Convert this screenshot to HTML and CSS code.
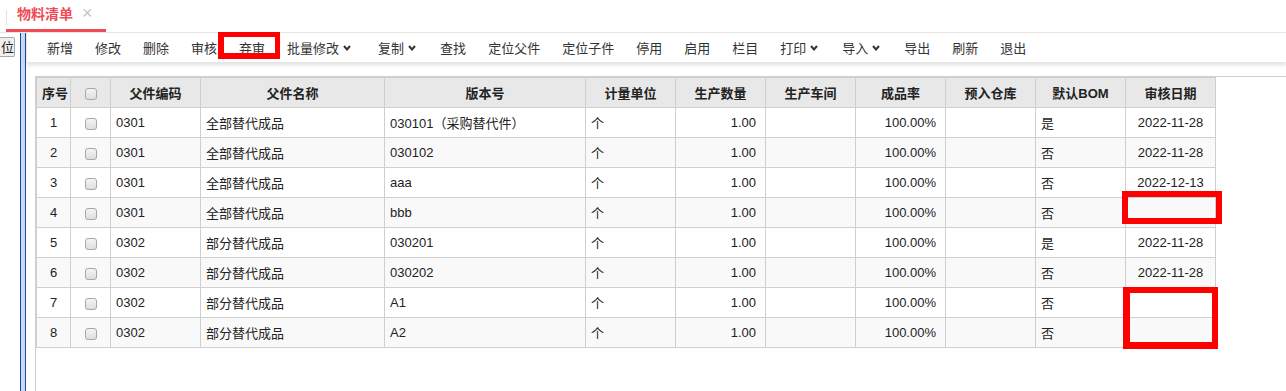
FILE: index.html
```html
<!DOCTYPE html>
<html lang="zh-CN">
<head>
  <meta charset="UTF-8" />
  <title>物料清单</title>
  <link rel="stylesheet" href="styles.css">
</head>
<body>

<div class="tabbar">
  <div class="tab active">
    <span class="tab-title">物料清单</span>
    <span class="tab-close">×</span>
  </div>
</div>

<div class="main">
  <div class="side">
    <button class="locate">位</button>
  </div>
  <div class="splitter"></div>

  <div class="content">
    <div class="toolbar">
      <span class="tool">新增</span>
      <span class="tool">修改</span>
      <span class="tool">删除</span>
      <span class="tool">审核</span>
      <span class="tool">弃审</span>
      <span class="tool drop wide">批量修改<svg class="chev" viewBox="0 0 8 6"><polyline points="1,1 4,4.5 7,1"/></svg></span>
      <span class="tool drop">复制<svg class="chev" viewBox="0 0 8 6"><polyline points="1,1 4,4.5 7,1"/></svg></span>
      <span class="tool">查找</span>
      <span class="tool">定位父件</span>
      <span class="tool">定位子件</span>
      <span class="tool">停用</span>
      <span class="tool">启用</span>
      <span class="tool">栏目</span>
      <span class="tool drop">打印<svg class="chev" viewBox="0 0 8 6"><polyline points="1,1 4,4.5 7,1"/></svg></span>
      <span class="tool drop">导入<svg class="chev" viewBox="0 0 8 6"><polyline points="1,1 4,4.5 7,1"/></svg></span>
      <span class="tool">导出</span>
      <span class="tool">刷新</span>
      <span class="tool">退出</span>
    </div>

    <div class="grid">
      <table class="bom">
        <colgroup>
          <col style="width:34px"><col style="width:40px"><col style="width:90px"><col style="width:184px">
          <col style="width:201px"><col style="width:90px"><col style="width:90px"><col style="width:90px">
          <col style="width:90px"><col style="width:90px"><col style="width:90px"><col style="width:90px">
        </colgroup>
        <thead>
          <tr>
            <th>序号</th>
            <th><span class="chk"></span></th>
            <th>父件编码</th>
            <th>父件名称</th>
            <th>版本号</th>
            <th>计量单位</th>
            <th>生产数量</th>
            <th>生产车间</th>
            <th>成品率</th>
            <th>预入仓库</th>
            <th>默认BOM</th>
            <th>审核日期</th>
          </tr>
        </thead>
        <tbody>
          <tr>
            <td class="c">1</td><td class="c"><span class="chk"></span></td><td>0301</td><td>全部替代成品</td>
            <td>030101（采购替代件）</td><td>个</td><td class="r">1.00</td><td></td>
            <td class="r">100.00%</td><td></td><td>是</td><td class="c">2022-11-28</td>
          </tr>
          <tr>
            <td class="c">2</td><td class="c"><span class="chk"></span></td><td>0301</td><td>全部替代成品</td>
            <td>030102</td><td>个</td><td class="r">1.00</td><td></td>
            <td class="r">100.00%</td><td></td><td>否</td><td class="c">2022-11-28</td>
          </tr>
          <tr>
            <td class="c">3</td><td class="c"><span class="chk"></span></td><td>0301</td><td>全部替代成品</td>
            <td>aaa</td><td>个</td><td class="r">1.00</td><td></td>
            <td class="r">100.00%</td><td></td><td>否</td><td class="c">2022-12-13</td>
          </tr>
          <tr>
            <td class="c">4</td><td class="c"><span class="chk"></span></td><td>0301</td><td>全部替代成品</td>
            <td>bbb</td><td>个</td><td class="r">1.00</td><td></td>
            <td class="r">100.00%</td><td></td><td>否</td><td class="c"></td>
          </tr>
          <tr>
            <td class="c">5</td><td class="c"><span class="chk"></span></td><td>0302</td><td>部分替代成品</td>
            <td>030201</td><td>个</td><td class="r">1.00</td><td></td>
            <td class="r">100.00%</td><td></td><td>是</td><td class="c">2022-11-28</td>
          </tr>
          <tr>
            <td class="c">6</td><td class="c"><span class="chk"></span></td><td>0302</td><td>部分替代成品</td>
            <td>030202</td><td>个</td><td class="r">1.00</td><td></td>
            <td class="r">100.00%</td><td></td><td>否</td><td class="c">2022-11-28</td>
          </tr>
          <tr>
            <td class="c">7</td><td class="c"><span class="chk"></span></td><td>0302</td><td>部分替代成品</td>
            <td>A1</td><td>个</td><td class="r">1.00</td><td></td>
            <td class="r">100.00%</td><td></td><td>否</td><td class="c"></td>
          </tr>
          <tr>
            <td class="c">8</td><td class="c"><span class="chk"></span></td><td>0302</td><td>部分替代成品</td>
            <td>A2</td><td>个</td><td class="r">1.00</td><td></td>
            <td class="r">100.00%</td><td></td><td>否</td><td class="c"></td>
          </tr>
        </tbody>
      </table>
    </div>
  </div>
</div>

<!-- annotation boxes drawn over the screenshot -->
<div class="mark mark-unaudit"></div>
<div class="mark mark-row4"></div>
<div class="mark mark-row78"></div>

</body>
</html>
```

FILE: styles.css
```css
:root {
  --text: #333;
  --line: #cfcfcf;
  --head-bg: #e8e8e8;
  --stripe: #f9f9f9;
  --tab-red: #ef4b55;
  --split-dark: #1d4ca8;
  --split-light: #c9d9f1;
}

* { box-sizing: border-box; }

body {
  margin: 0;
  background: #fff;
  color: var(--text);
  font-family: "Liberation Sans", "Noto Sans CJK SC", sans-serif;
  font-size: 13px;
  position: relative;
  height: 391px;
  overflow: hidden;
}

/* tab bar */
.tabbar {
  height: 33px;
  border-bottom: 1px solid #e6e6e6;
  padding-left: 6px;
  display: flex;
  align-items: flex-start;
}
.tab {
  height: 32px;
  width: 100px;
  display: flex;
  align-items: center;
  padding: 0 0 4px 11px;
  border-bottom: 3px solid var(--tab-red);
  gap: 9px;
  position: relative;
}
.tab::before {
  content: "";
  position: absolute;
  left: 0; top: 10px;
  height: 15px;
  border-left: 1px solid #e2e2e2;
}
.tab-title {
  color: var(--tab-red);
  font-size: 14px;
  font-weight: bold;
}
.tab-close {
  color: #c4c4c4;
  font-size: 18px;
  line-height: 1;
}

/* main area */
.main {
  display: flex;
  height: 358px;
}
.side {
  width: 20px;
  padding-top: 4px;
}
.locate {
  display: block;
  width: 15px;
  height: 20px;
  padding: 0;
  margin: 0;
  border: 1px solid #a9a9a9;
  border-left: none;
  border-radius: 0 2px 2px 0;
  background: #efefef;
  font-family: inherit;
  font-size: 13px;
  color: #222;
  line-height: 17px;
  text-align: right;
}
.splitter {
  width: 6px;
  background: var(--split-light);
  border-left: 1px solid var(--split-dark);
  border-right: 1px solid var(--split-dark);
}
.content {
  flex: 1;
  min-width: 0;
}

/* toolbar */
.toolbar {
  height: 29px;
  display: flex;
  align-items: center;
  padding-left: 9px;
  border-left: 1px solid #e8e8e8;
  box-shadow: 0 3px 4px rgba(0, 0, 0, 0.12);
  white-space: nowrap;
}
.tool {
  padding: 0 11px;
  display: flex;
  align-items: center;
  gap: 4px;
  color: var(--text);
}
.tool.drop { padding-right: 13px; }
.tool.drop.wide { padding-right: 16px; }
.chev {
  width: 8px;
  height: 6px;
  fill: none;
  stroke: #333;
  stroke-width: 2;
}

/* grid */
.grid {
  margin: 14px 0 0 9px;
  height: 320px;
  border-top: 1px solid var(--line);
  border-left: 1px solid var(--line);
}
.bom {
  table-layout: fixed;
  width: 1180px;
  border-collapse: collapse;
  border: 1px solid var(--line);
}
.bom th,
.bom td {
  height: 30px;
  border: 1px solid var(--line);
  padding: 0 5px;
  white-space: nowrap;
  overflow: hidden;
}
.bom th {
  background: var(--head-bg);
  font-weight: bold;
  color: #222;
  text-align: center;
}
.bom td { color: #222; }
.bom tbody tr:nth-child(even) td { background: var(--stripe); }
.bom td.c { text-align: center; }
.bom td.r { text-align: right; padding-right: 9px; }

.chk {
  display: inline-block;
  width: 12px;
  height: 12px;
  vertical-align: middle;
  border: 1px solid #a8a8a8;
  border-radius: 3px;
  background: linear-gradient(#f4f4f4, #dedede);
}

/* red annotation boxes */
.mark {
  position: absolute;
  border: 6px solid #ff0000;
}
.mark-unaudit {
  left: 218px; top: 32px;
  width: 62px; height: 27px;
  border-width: 5px 5px 6px 6px;
}
.mark-row4 {
  left: 1122px; top: 191px;
  width: 100px; height: 33px;
}
.mark-row78 {
  left: 1123px; top: 287px;
  width: 95px; height: 62px;
  border-width: 6px 6px 7px 7px;
}
```
